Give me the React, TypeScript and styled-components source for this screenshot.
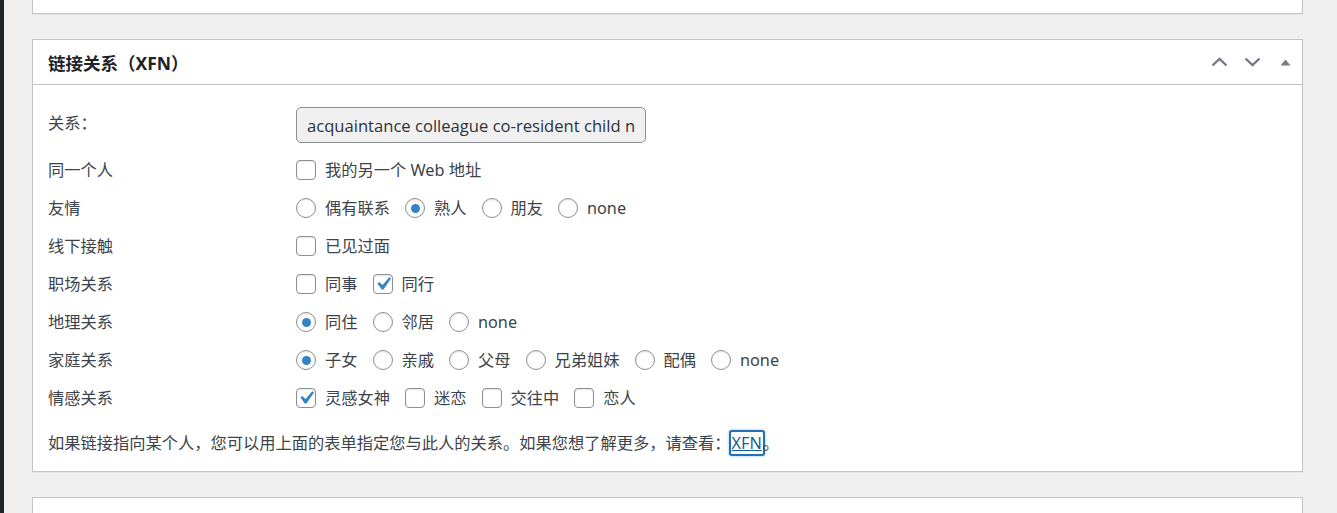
import styled, { createGlobalStyle } from "styled-components"

const GlobalStyle = createGlobalStyle`
  html, body {
    margin: 0;
    padding: 0;
    background: #f0f0f1;
    overflow: hidden;
  }
  body {
    font-family: "Noto Sans", "Noto Sans CJK SC", sans-serif;
    font-size: 16.25px;
    color: #3c434a;
  }
`

const Screen = styled.div`
  display: flex;
  flex-direction: row;
  width: 100vw;
  height: 100vh;
  overflow: hidden;
`

const AdminMenu = styled.div`
  width: 4px;
  flex-shrink: 0;
  background-color: #1d2327;
`

const Main = styled.div`
  flex: 1;
  display: flex;
  flex-direction: column;
  gap: 25px;
  padding: 0 34px 0 28px;
`

const Postbox = styled.div<{ $stub?: "top" | "bottom" }>`
  box-sizing: border-box;
  background: #ffffff;
  border: 1px solid #c3c4c7;
  box-shadow: 0 1px 1px rgba(0, 0, 0, 0.04);
  flex-shrink: 0;
  ${(p) => p.$stub === "top" && `border-top: none; height: 14px;`}
  ${(p) => p.$stub === "bottom" && `border-bottom: none; height: 120px;`}
`

const Header = styled.div`
  display: flex;
  align-items: center;
  height: 44px;
  border-bottom: 1px solid #c3c4c7;
  padding-left: 15px;
`

const Title = styled.h2`
  flex: 1;
  margin: 0;
  font-size: 17.5px;
  font-weight: 700;
  color: #1d2327;
`

const HeaderActions = styled.div`
  display: flex;
  align-items: center;
  height: 100%;
`

const HandleButton = styled.button`
  width: 33px;
  height: 100%;
  padding: 0;
  border: 0;
  background: transparent;
  display: flex;
  align-items: center;
  justify-content: center;
  color: #787c82;
  cursor: pointer;
`

const Inside = styled.div`
  padding: 22px 15px 16px 15px;
`

const FieldRow = styled.div<{ $tall?: boolean }>`
  display: grid;
  grid-template-columns: 248px 1fr;
  align-items: center;
  height: ${(p) => (p.$tall ? "36px" : "38px")};
  margin-bottom: ${(p) => (p.$tall ? "8px" : "0")};
`

const FieldLabel = styled.div<{ $raised?: boolean }>`
  color: #3c434a;
  line-height: 24px;
  margin-top: ${(p) => (p.$raised ? "-4px" : "0")};
`

const Options = styled.div`
  display: flex;
  align-items: center;
`

const Option = styled.label`
  display: flex;
  align-items: center;
  gap: 9px;
  margin-right: 15px;
  line-height: 24px;
  color: #3c434a;
  white-space: nowrap;
`

const Control = styled.span<{ $round?: boolean }>`
  box-sizing: border-box;
  width: 20px;
  height: 20px;
  flex-shrink: 0;
  border: 1px solid #8c8f94;
  border-radius: ${(p) => (p.$round ? "50%" : "4px")};
  background: #ffffff;
  display: flex;
  align-items: center;
  justify-content: center;
  overflow: visible;
  box-shadow: inset 0 1px 2px rgba(0, 0, 0, 0.1);

  svg {
    flex-shrink: 0;
    margin: -4px;
  }
`

const RadioDot = styled.span`
  width: 9px;
  height: 9px;
  border-radius: 50%;
  background: #3582c4;
`

const RelInput = styled.input`
  box-sizing: border-box;
  width: 350px;
  height: 36px;
  padding: 0 10px;
  border: 1px solid #8c8f94;
  border-radius: 5px;
  background: #f0f0f1;
  color: #2c3338;
  font-family: "Open Sans", "Noto Sans", sans-serif;
  font-size: 16.6px;
  outline: none;
`

const Note = styled.p`
  margin: 14px 0 0 0;
  line-height: 24px;
  color: #3c434a;
`

const NoteLink = styled.a`
  color: #135e96;
  text-decoration: underline;
  padding: 0 1px;
  border-radius: 1px;
  box-shadow: 0 0 0 2px #2271b1, 0 0 3px 2px rgba(79, 148, 212, 0.6);
`

type Choice = { label: string; checked?: boolean }
type Field = { label: string; kind: "check" | "radio"; choices: Choice[] }

const fields: Field[] = [
  { label: "同一个人", kind: "check", choices: [{ label: "我的另一个 Web 地址" }] },
  {
    label: "友情",
    kind: "radio",
    choices: [{ label: "偶有联系" }, { label: "熟人", checked: true }, { label: "朋友" }, { label: "none" }],
  },
  { label: "线下接触", kind: "check", choices: [{ label: "已见过面" }] },
  { label: "职场关系", kind: "check", choices: [{ label: "同事" }, { label: "同行", checked: true }] },
  {
    label: "地理关系",
    kind: "radio",
    choices: [{ label: "同住", checked: true }, { label: "邻居" }, { label: "none" }],
  },
  {
    label: "家庭关系",
    kind: "radio",
    choices: [
      { label: "子女", checked: true },
      { label: "亲戚" },
      { label: "父母" },
      { label: "兄弟姐妹" },
      { label: "配偶" },
      { label: "none" },
    ],
  },
  {
    label: "情感关系",
    kind: "check",
    choices: [{ label: "灵感女神", checked: true }, { label: "迷恋" }, { label: "交往中" }, { label: "恋人" }],
  },
]

// checkbox tick, drawn larger than the box so it fills it
function CheckMark() {
  return (
    <svg width="26" height="26" viewBox="0 0 20 20">
      <path fill="#3582c4" d="M14.83 4.89l1.34.94-5.81 8.38H9.02L5.78 9.67l1.34-1.25 2.57 2.4z" />
    </svg>
  )
}

function ChevronUp() {
  return (
    <svg width="17" height="10" viewBox="0 0 17 10">
      <path d="M1.5 8.5L8.5 1.8l7 6.7" fill="none" stroke="currentColor" strokeWidth="2.4" />
    </svg>
  )
}

function ChevronDown() {
  return (
    <svg width="17" height="10" viewBox="0 0 17 10">
      <path d="M1.5 1.5l7 6.7 7-6.7" fill="none" stroke="currentColor" strokeWidth="2.4" />
    </svg>
  )
}

function Triangle() {
  return (
    <svg width="11" height="7" viewBox="0 0 11 7">
      <path d="M0.5 6.5L5.5 0.5l5 6z" fill="currentColor" />
    </svg>
  )
}

function App() {
  return (
    <Screen>
      <GlobalStyle />
      <AdminMenu />
      <Main>
        <Postbox $stub="top" />
        <Postbox>
          <Header>
            <Title>链接关系（XFN）</Title>
            <HeaderActions>
              <HandleButton>
                <ChevronUp />
              </HandleButton>
              <HandleButton>
                <ChevronDown />
              </HandleButton>
              <HandleButton>
                <Triangle />
              </HandleButton>
            </HeaderActions>
          </Header>
          <Inside>
            <FieldRow $tall>
              <FieldLabel $raised>关系：</FieldLabel>
              <div>
                <RelInput readOnly value="acquaintance colleague co-resident child n" />
              </div>
            </FieldRow>
            {fields.map((field) => (
              <FieldRow key={field.label}>
                <FieldLabel>{field.label}</FieldLabel>
                <Options>
                  {field.choices.map((choice) => (
                    <Option key={choice.label}>
                      <Control $round={field.kind === "radio"}>
                        {choice.checked && (field.kind === "radio" ? <RadioDot /> : <CheckMark />)}
                      </Control>
                      {choice.label}
                    </Option>
                  ))}
                </Options>
              </FieldRow>
            ))}
            <Note>
              如果链接指向某个人，您可以用上面的表单指定您与此人的关系。如果您想了解更多，请查看：
              <NoteLink href="#xfn">XFN</NoteLink>。
            </Note>
          </Inside>
        </Postbox>
        <Postbox $stub="bottom" />
      </Main>
    </Screen>
  )
}

export default App
